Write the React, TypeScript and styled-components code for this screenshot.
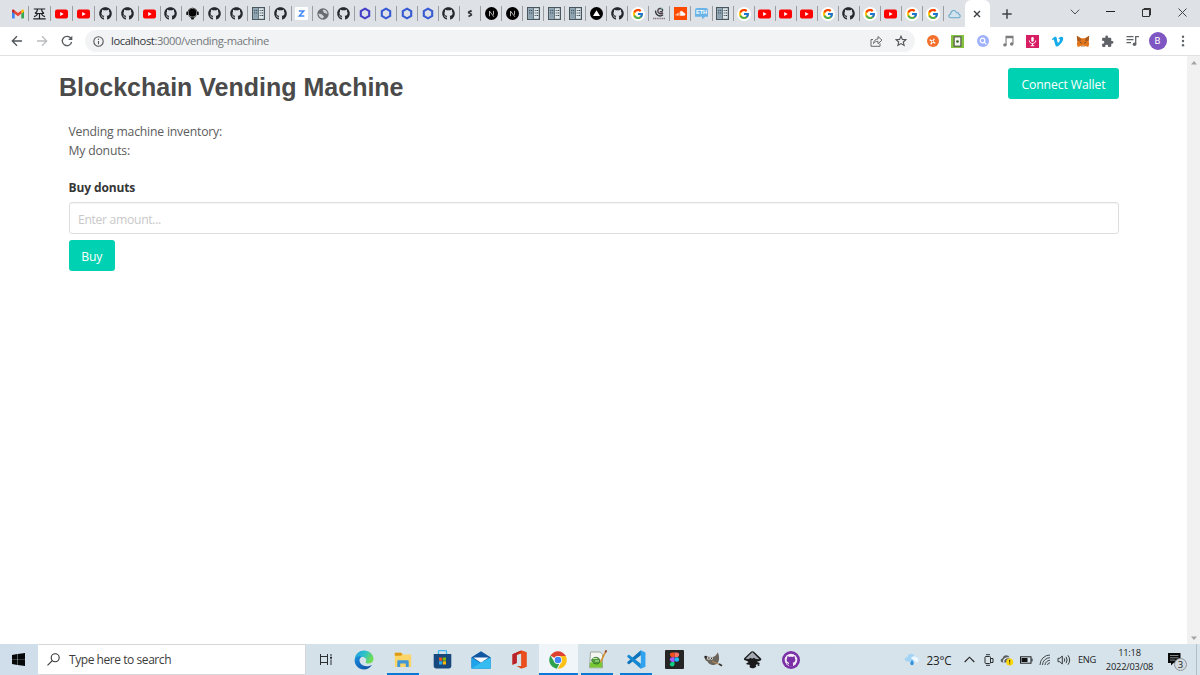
import React from "react";
import styled, { createGlobalStyle } from "styled-components";
import { FaGithub, FaVimeoV } from "react-icons/fa";
import { FcGoogle } from "react-icons/fc";

const GlobalStyle = createGlobalStyle`
  * { box-sizing: border-box; }
  body { margin: 0; background: #fff; overflow: hidden; }
  svg { display: block; flex: none; }
`;

const ui = `"Open Sans", "Noto Sans", sans-serif`;

const Screen = styled.div`
  display: flex;
  flex-direction: column;
  width: 1200px;
  height: 675px;
  font-family: ${ui};
  overflow: hidden;
`;

/* ---------- Browser tabs ---------- */
const TabStrip = styled.div`
  display: flex;
  height: 27px;
  padding-left: 7.6px;
  background: #dee1e6;
`;
const Tab = styled.div<{ $w: number; $last?: boolean }>`
  display: flex;
  align-items: center;
  justify-content: center;
  width: ${(p) => p.$w}px;
  height: 27px;
  flex: none;
  padding-right: 1px;
  background: linear-gradient(#9a9da1, #9a9da1) right 6px / 1px 15px no-repeat;
  ${(p) => p.$last && "background: none; padding-right: 0;"}
`;
const ActiveTab = styled.div`
  display: flex;
  align-items: center;
  justify-content: center;
  width: 25px;
  height: 27px;
  flex: none;
  padding-right: 1px;
  background: #fff;
  border-radius: 6px 6px 0 0;
`;
const NewTab = styled.div`
  display: flex;
  align-items: center;
  justify-content: center;
  width: 34px;
`;
const WindowControls = styled.div`
  display: grid;
  grid-template-columns: repeat(4, 35.7px);
  align-items: center;
  justify-items: center;
  height: 24px;
  margin-left: auto;
`;
const WhiteDisc = styled.span`
  display: flex;
  align-items: center;
  justify-content: center;
  width: 14px;
  height: 14px;
  border-radius: 50%;
  background: #fff;
`;
const BlackDisc = styled(WhiteDisc)`
  width: 13px;
  height: 13px;
  background: #000;
`;

/* ---------- Toolbar ---------- */
const Toolbar = styled.div`
  display: flex;
  align-items: center;
  height: 29px;
  border-bottom: 1px solid #dfe1e4;
  background: #fff;
`;
const NavButtons = styled.div`
  display: grid;
  grid-template-columns: 25px 25px 25px;
  justify-items: center;
  padding-left: 4.5px;
  width: 85px;
`;
const AddressBar = styled.div`
  display: flex;
  align-items: center;
  width: 830px;
  height: 22px;
  padding: 0 8px;
  border-radius: 11px;
  background: #f1f3f4;
`;
const Url = styled.span`
  margin-left: 7px;
  font-size: 11.2px;
  line-height: 22px;
  letter-spacing: -0.38px;
  color: #74787c;
  white-space: nowrap;
  b { font-weight: 400; color: #34373a; }
`;
const AddressActions = styled.div`
  display: flex;
  align-items: center;
  gap: 12px;
  margin-left: auto;
`;
const Extensions = styled.div`
  display: grid;
  grid-template-columns: repeat(11, 25px);
  justify-items: center;
  align-items: center;
  padding-left: 5px;
`;
const Avatar = styled.span`
  width: 18px;
  height: 18px;
  border-radius: 50%;
  background: #7e57c2;
  color: #fff;
  font: 9.5px/18px Roboto, sans-serif;
  text-align: center;
`;
const ExtTile = styled.span<{ $bg: string; $round?: boolean }>`
  display: flex;
  align-items: center;
  justify-content: center;
  width: ${(p) => (p.$round ? 12 : 13)}px;
  height: ${(p) => (p.$round ? 12 : 13)}px;
  border-radius: ${(p) => (p.$round ? "50%" : "0")};
  background: ${(p) => p.$bg};
`;

/* ---------- Page ---------- */
const Viewport = styled.div`
  display: flex;
  height: 588px;
`;
const Page = styled.main`
  flex: 1;
  padding: 12px 68px 0 59px;
`;
const Header = styled.header`
  display: flex;
  justify-content: space-between;
  align-items: flex-start;
  height: 54px;
`;
const Title = styled.h1`
  margin: 3px 0 0;
  font: 700 25px/32px "Liberation Sans", Arial, sans-serif;
  color: #4a4a4a;
  white-space: nowrap;
`;
const PrimaryButton = styled.button<{ $w: number }>`
  width: ${(p) => p.$w}px;
  height: 31.3px;
  padding: 1px 0 0;
  border: 0;
  border-radius: 3px;
  background: #00d1b2;
  color: #fff;
  font: 12.2px/31px ${ui};
  letter-spacing: -0.1px;
`;
const Section = styled.section`
  padding: 1px 0 0 9.5px;
`;
const Line = styled.p`
  margin: 0;
  font-size: 12.2px;
  line-height: 18.6px;
  letter-spacing: -0.18px;
  color: #5c5c5c;
`;
const Label = styled.label`
  display: block;
  margin: 17.9px 0 5.2px;
  font-size: 12px;
  font-weight: 700;
  line-height: 19px;
  letter-spacing: -0.12px;
  color: #363636;
`;
const AmountInput = styled.input`
  display: block;
  width: 100%;
  height: 31.5px;
  margin-bottom: 6px;
  padding: 3px 8.5px 0;
  border: 1px solid #dedede;
  border-radius: 3px;
  box-shadow: inset 0 1px 1px rgba(10, 10, 10, 0.04);
  font: 12.2px ${ui};
  letter-spacing: -0.33px;
  &::placeholder { color: #c9c9c9; opacity: 1; }
`;
const Scrollbar = styled.div`
  display: flex;
  flex-direction: column;
  justify-content: space-between;
  align-items: center;
  width: 13px;
  padding: 5px 0 4px;
  background: #f1f1f1;
`;

/* ---------- Taskbar ---------- */
const Taskbar = styled.div`
  display: flex;
  height: 31px;
  background: linear-gradient(90deg, #cfdeea, #d5e2ea 30%, #d6e3eb);
`;
const Start = styled.div`
  display: flex;
  align-items: center;
  justify-content: center;
  width: 38px;
  padding-right: 1px;
`;
const Search = styled.div`
  display: flex;
  align-items: center;
  width: 268px;
  padding-left: 9px;
  border: solid #d5d8da;
  border-width: 1px 1px 1px 0;
  background: #fff;
  color: #3c3c3c;
  font-size: 12px;
  letter-spacing: -0.44px;
  span { margin-left: 9px; }
`;
const Apps = styled.div`
  display: flex;
  padding-left: 0.3px;
`;
const AppSlot = styled.div<{ $open?: boolean; $active?: boolean }>`
  display: flex;
  align-items: center;
  justify-content: center;
  width: 38.8px;
  background: ${(p) => (p.$active ? "#eff5f9" : "transparent")};
  ${(p) =>
    (p.$open || p.$active) &&
    `background-image: linear-gradient(#0a78d4, #0a78d4);
     background-size: ${p.$active ? 39 : 32}px 2px;
     background-position: bottom center;
     background-repeat: no-repeat;`}
`;
const Tray = styled.div`
  display: grid;
  grid-template-columns: 18px 36px 24px 16px 20px 18px 19px 19px 28px 57px 38px 4px;
  align-items: center;
  justify-items: center;
  margin-left: auto;
  color: #222;
`;
const TrayText = styled.span<{ $size: number; $track?: number }>`
  font-size: ${(p) => p.$size}px;
  letter-spacing: ${(p) => p.$track ?? -0.3}px;
  white-space: nowrap;
`;
const Clock = styled.div`
  font-size: 9.3px;
  line-height: 14px;
  letter-spacing: -0.2px;
  text-align: center;
`;
const DesktopEdge = styled.i`
  justify-self: start;
  width: 1px;
  height: 31px;
  background: #b3bec5;
`;
const Notifications = styled.div`
  position: relative;
  width: 20px;
  height: 20px;
`;
const Count = styled.span`
  position: absolute;
  left: 7px;
  top: 8px;
  width: 13px;
  height: 13px;
  border: 1px solid #8d9499;
  border-radius: 50%;
  background: #d3dae0;
  font-size: 9.5px;
  line-height: 11px;
  text-align: center;
`;

/* ---------- Icons ---------- */
const Gmail = () => (
  <svg width="12" height="10" viewBox="0 0 24 18">
    <path d="M0 2v14.5c0 1 .7 1.500 1.500 1.500H5.500V8z" fill="#4285f4" />
    <path d="M24 2v14.500c0 1-.7 1.500-1.500 1.500h-4V8z" fill="#34a853" />
    <path d="M18.500 2v6.500L24 4.500V2.300c0-2.200-2.500-2.900-4-1.700z" fill="#fbbc04" />
    <path d="M0 4.500l5.500 4V2L4 .6C2.500-.6 0 .1 0 2.300z" fill="#c5221f" />
    <path d="M5.500 2L12 7l6.500-5v6.500L12 13.500l-6.500-5z" fill="#ea4335" />
  </svg>
);
const Beam = () => (
  <svg width="13" height="12" viewBox="0 0 13 12" fill="none" stroke="#1c2022" strokeWidth="1.200">
    <path d="M.8 1h11.400M2 5.500h9M.3 10.900h12.400M6.500 5.500v5.400M4.500 1C4.500 3.500 3.500 4.600 2 5.500M8.500 1c0 2.500 1 3.600 2.500 4.500M4.500 5.500C4.200 7.300 3 8.200 1 8.600M8.500 5.500C8.800 7.300 10 8.200 12 8.600" />
  </svg>
);
const YouTube = () => (
  <svg width="13" height="10" viewBox="0 0 13 10">
    <rect y=".4" width="13" height="9.200" rx="2" fill="#f00" />
    <path d="M5.200 3l3.500 2-3.500 2z" fill="#fff" />
  </svg>
);
const GitHub = () => <FaGithub size={13} color="#24292f" />;
const Bot = () => (
  <svg width="13" height="13" viewBox="0 0 13 13">
    <circle cx="6.500" cy="5.700" r="4" fill="#050505" />
    <path d="M1.200 4.700v3.200M11.800 4.700v3.200" stroke="#111" strokeWidth="1.800" />
    <path d="M1.700 5a4.900 4.900 0 0 1 9.600 0" fill="none" stroke="#222" strokeWidth=".8" />
    <path d="M4.500 10.300h4L7.500 12.500h-2z" fill="#111" />
    <path d="M2.500 8.500c1 1.700 2.500 2 4 2s3-.3 4-2" fill="none" stroke="#333" strokeWidth=".8" />
  </svg>
);
const Book = () => (
  <svg width="13" height="13" viewBox="0 0 13 13">
    <rect x=".6" y=".6" width="11.800" height="11.800" fill="#dfe8ec" stroke="#48575f" strokeWidth="1.200" />
    <rect x="1.200" y="1.200" width="5" height="10.600" fill="#8ba1af" />
    <path d="M6.500 1v11" stroke="#5c6d76" strokeWidth=".9" />
    <path d="M2.200 3.500h1M2.200 6h1M4.200 3.500h1M4.200 6h1M7.700 3.500h1M9.500 3.500h1.700M7.700 6h1M9.500 6h1.700M7.700 8.500h1M9.500 8.500h1.700" stroke="#39454c" strokeWidth="1.100" />
  </svg>
);
const ZTile = () => (
  <svg width="13" height="13" viewBox="0 0 13 13">
    <rect width="13" height="13" rx="1" fill="#fff" />
    <path d="M3.800 4.100h4.900L4.300 9h5" fill="none" stroke="#4189f5" strokeWidth="1.500" />
  </svg>
);
const Globe = () => (
  <svg width="12" height="12" viewBox="0 0 12 12">
    <circle cx="6" cy="6" r="5.700" fill="#686c70" />
    <path d="M6.500 1.500C5.500 2 5.500 3 6.500 3.500c0 1 .5 1.700 1.700 1.500.7.800 1.600.8 2.300.5C10.300 3.500 8.700 1.700 6.500 1.500zM1.500 5.500c1 .5 3.500 0 4 1.500 0 1 1.500.5 1.500 1.500s-1 .7-1.300 2C3 10.200 1.400 8 1.500 5.500z" fill="#d0d3d7" />
  </svg>
);
const Hexagon = ({ color }: { color: string }) => (
  <svg width="12" height="13" viewBox="0 0 12 13">
    <path d="M6 1.700l4.200 2.400v4.800L6 11.300 1.800 8.900V4.100z" fill="none" stroke={color} strokeWidth="2.100" />
  </svg>
);
const Serpent = () => (
  <svg width="6" height="9" viewBox="0 0 7 10">
    <path d="M4.800.7L1 2.600v2l3.500 1.900V4.900L3 4l3-1.300zM2.200 9.300L6 7.400v-2L3 3.800v1.600l1.200.7L1.200 7.500z" fill="#34383b" />
  </svg>
);
const NextMark = () => (
  <svg width="13" height="13" viewBox="0 0 13 13">
    <circle cx="6.500" cy="6.500" r="6.500" fill="#000" />
    <path d="M4.500 9.200V4.100l4.400 5.700M8.500 3.900v3.900" fill="none" stroke="#ddd" strokeWidth=".8" />
  </svg>
);
const Google = () => (
  <WhiteDisc>
    <FcGoogle size={12} />
  </WhiteDisc>
);
const Truffle = () => (
  <svg width="14" height="13" viewBox="0 0 14 13" fill="none">
    <path d="M3.500 3.500C3.500 6.500 5.500 8.700 8 9c1.200 0 2.200-.4 3-1.200" stroke="#3b3a42" strokeWidth="1.400" />
    <path d="M11 5.800C9.500 7.500 5.800 6.700 5.800 3.900 5.800 1.300 9.300.6 10.500 2.600c.7 1.700-1.500 3-2.500 1.500" stroke="#4a4048" strokeWidth="1.400" />
    <circle cx="10" cy="1.300" r=".9" fill="#78c6c0" />
    <path d="M1 11.500h12" stroke="#8a7880" strokeWidth="1.500" strokeDasharray="1.200 .6" />
  </svg>
);
const SoundCloud = () => (
  <svg width="13" height="13" viewBox="0 0 13 13">
    <rect width="13" height="13" fill="#ff4a00" />
    <path d="M6.300 8.500V4.600c1.500-.9 3 .1 3.300 1.500 2 0 2 2.400.3 2.400z" fill="#fff" stroke="#fff" strokeWidth=".5" />
    <path d="M2.200 7v1.500M3.600 6.300v2.400M5 5.500v3.200" stroke="#fff" strokeWidth=".8" />
  </svg>
);
const EthChat = styled.span`
  width: 13px;
  height: 12px;
  border-radius: 2px;
  background: #6ab4e8;
  color: #fff;
  font: 700 5.5px/9px "Liberation Sans", sans-serif;
  text-align: center;
  clip-path: polygon(0 0, 100% 0, 100% 78%, 78% 78%, 55% 100%, 55% 78%, 0 78%);
`;
const Cloud = () => (
  <svg width="13" height="10" viewBox="0 0 13 10">
    <path d="M3 8.800C.2 8.800 0 5.700 2.500 5.200 3 1 7.500.2 8.500 3.600c1.700-.2 2.300.7 2.300 1.700 2 .6 1.800 3.300-.3 3.500z" fill="#d3e3ee" stroke="#6aa9ca" strokeWidth="1.100" />
  </svg>
);
const Vercel = () => (
  <BlackDisc>
    <svg width="7" height="7" viewBox="0 0 7 7"><path d="M3.500.3L7 6H0z" fill="#fff" /></svg>
  </BlackDisc>
);

const ICONS: Record<string, React.ReactNode> = {
  gmail: <Gmail />, beam: <Beam />, yt: <YouTube />, gh: <GitHub />, bot: <Bot />, book: <Book />,
  z: <ZTile />, globe: <Globe />, violet: <Hexagon color="#4540c8" />, hex: <Hexagon color="#375bd2" />,
  sol: <Serpent />, next: <NextMark />, vercel: <Vercel />, g: <Google />, truffle: <Truffle />,
  sc: <SoundCloud />, eth: <EthChat>ETH</EthChat>, cloud: <Cloud />,
};
const PINNED = "gmail beam yt yt gh gh yt gh bot gh gh book gh".split(" ");
const TABS =
  "z globe gh violet hex hex hex gh sol next next book book book vercel gh g truffle sc eth book g yt yt yt g gh g yt g g cloud".split(" ");

const Stroke = ({ w, h, d, color = "#55595d", sw = 1.2 }: { w: number; h: number; d: string; color?: string; sw?: number }) => (
  <svg width={w} height={h} viewBox={`0 0 ${w} ${h}`} fill="none" stroke={color} strokeWidth={sw}>
    <path d={d} />
  </svg>
);

const Reload = () => (
  <svg width="12" height="12" viewBox="0 0 12 12">
    <path d="M9.800 3.200A4.700 4.700 0 1 0 10.600 7" fill="none" stroke="#55595d" strokeWidth="1.300" />
    <path d="M11.300.8v4.200H7.100z" fill="#55595d" />
  </svg>
);
const Info = () => (
  <svg width="11" height="11" viewBox="0 0 11 11" fill="none" stroke="#55595d" strokeWidth="1.100">
    <circle cx="5.500" cy="5.500" r="4.700" />
    <path d="M5.500 5v3.200M5.500 2.700v1.200" />
  </svg>
);
const Fox = () => (
  <svg width="14" height="13" viewBox="0 0 14 13">
    <path d="M.8.8L5.300 3.200h3.400L13.200.8l-.6 4.700.6 3.700-1 2.700-3-.8-1.300 1H6l-1.200-1-3 .8-1-2.700.6-3.700z" fill="#e2761b" />
    <path d="M.8.8l4.500 3.400-1 2.300-3-.8zM13.200.8L8.700 4.200l1 2.300 3-.8z" fill="#a85a20" />
    <path d="M5.500 10.500h3l-.5 1.500H6z" fill="#d7c1b3" />
    <path d="M3.500 7.200l2 .2-.2 1.200zM10.500 7.200l-2 .2.200 1.200z" fill="#233447" />
  </svg>
);
const Puzzle = () => (
  <svg width="13" height="13" viewBox="0 0 24 24" fill="#5f6368">
    <path d="M20.500 11H19V7c0-1.100-.9-2-2-2h-4V3.500a2.500 2.500 0 0 0-5 0V5H4c-1.100 0-2 .9-2 2v3.800h1.500a2.700 2.700 0 0 1 0 5.400H2V20c0 1.100.9 2 2 2h3.800v-1.500a2.700 2.700 0 0 1 5.400 0V22H17c1.100 0 2-.9 2-2v-4h1.500a2.500 2.500 0 0 0 0-5z" />
  </svg>
);
const Note = () => (
  <svg width="12" height="12" viewBox="0 0 12 12" fill="#7b7b7b">
    <path d="M3.500.8h8v8.200h-1.100V3.200H4.600V10H3.500z" />
    <circle cx="2.900" cy="9.900" r="1.700" /><circle cx="9.700" cy="9" r="1.700" />
  </svg>
);
const Queue = () => (
  <svg width="13" height="12" viewBox="0 0 13 12">
    <path d="M.5 1.700h7M.5 4.700h7M.5 7.700h4.500M9.700 9.200V1.700H13" fill="none" stroke="#5f6368" strokeWidth="1.300" />
    <circle cx="8.500" cy="9.300" r="1.800" fill="#5f6368" />
  </svg>
);
const Kebab = () => (
  <svg width="4" height="12" viewBox="0 0 4 12" fill="#5f6368">
    <circle cx="2" cy="1.700" r="1.200" /><circle cx="2" cy="6" r="1.200" /><circle cx="2" cy="10.300" r="1.200" />
  </svg>
);

const WindowsLogo = () => (
  <svg width="13" height="13" viewBox="0 0 13 13" fill="#050708">
    <path d="M0 1.900l5.300-.8v5.100H0zM5.700 1L13 0v6.200H5.700zM0 6.600h5.300v5.300L0 11.100zM5.700 6.600H13V13l-7.300-1z" />
  </svg>
);
const Edge = () => (
  <svg width="20" height="20" viewBox="0 0 20 20">
    <defs>
      <linearGradient id="edgeTop" x1="0" y1="0" x2="1" y2=".4">
        <stop offset="0" stopColor="#1c9be0" /><stop offset=".55" stopColor="#2fc2c9" /><stop offset="1" stopColor="#6fdd55" />
      </linearGradient>
      <linearGradient id="edgeLow" x1="0" y1="0" x2="1" y2="1">
        <stop offset="0" stopColor="#1b8fe0" /><stop offset="1" stopColor="#0c4a9c" />
      </linearGradient>
    </defs>
    <path d="M.8 9C1.500 3.500 5.500.5 10 .5c5.500 0 9.500 4 9.500 8.300 0 3-2.300 4.700-5 4.700-2.200 0-3.300-.8-2.700-1.600 1.500-2.500-.3-5-3.800-5-3.200 0-6 1-7.200 2.100z" fill="url(#edgeTop)" />
    <path d="M.6 9.500C2 6.700 5 5.500 8 6.800c-2.800 1-3.200 4.300-1.300 6.700 2.300 3 7 3.800 11.300 1.300-1.700 3-4.700 4.700-8 4.700-5.500 0-9.700-4.500-9.400-10z" fill="url(#edgeLow)" />
  </svg>
);
const Explorer = () => (
  <svg width="18" height="16" viewBox="0 0 18 16">
    <path d="M.8.8h6.500l1.500 1.700h8.400V15H.8z" fill="#fbd567" />
    <path d="M.8.8h6.500l1 1.700L7 3.700H.8z" fill="#dd9a13" />
    <path d="M3.300 15V9.500c0-.8.5-1.200 1.200-1.200h9c.7 0 1.200.4 1.200 1.200V15h-2.900v-3.500H6.200V15z" fill="#3f97d8" />
  </svg>
);
const Store = () => (
  <svg width="19" height="19" viewBox="0 0 19 19">
    <path d="M5.500 4.500v-3c0-.6.300-.9.900-.9h6.200c.6 0 .9.300.9.900v3" fill="none" stroke="#43b8ef" strokeWidth="1.300" />
    <path d="M.7 4h17.600v12c0 1.500-1 2.500-2.500 2.500H3.200C1.700 18.500.7 17.500.7 16z" fill="#17497f" />
    <path d="M6 7.500h3.200v3.200H6z" fill="#f25022" /><path d="M9.800 7.500H13v3.200H9.800z" fill="#7fba00" />
    <path d="M6 11.300h3.200v3.200H6z" fill="#28a8ea" /><path d="M9.800 11.300H13v3.200H9.800z" fill="#ffb900" />
  </svg>
);
const Mail = () => (
  <svg width="20" height="18" viewBox="0 0 20 18">
    <path d="M.5 6.200L10 .3l9.500 5.900V17.500H.5z" fill="#1156a0" />
    <path d="M.5 6.600l9.500 5.600 9.500-5.600v10.900H.5z" fill="#1fa3ea" />
    <path d="M2.300 6.400h15.400L10 11.800z" fill="#f7fafc" />
    <path d="M.5 17.500L10 11.800l9.500-5.200v10.900z" fill="#37bcf2" />
  </svg>
);
const Office = () => (
  <svg width="15" height="19" viewBox="0 0 15 19">
    <path d="M9.200.4l5.300 1.800v14.600l-5.300 1.800-4.500-2.700 4.700.4V3.600L4.700 5v8L.5 14.800V4.200z" fill="#d83b01" />
    <path d="M9.200.4L4.700 5v8L.5 14.800V4.200z" fill="#b7222c" />
    <path d="M9.400 3.600V.5l5.100 1.700v14.600l-5.100 1.700z" fill="#ea4f1d" />
  </svg>
);
const Chrome = () => (
  <svg width="18" height="18" viewBox="0 0 18 18">
    <path d="M9 9L1.400 4.600A8.800 8.800 0 0 1 16.600 4.600L17 5H9z" fill="#e04232" />
    <path d="M9 5h7.800A8.800 8.800 0 0 1 8.800 17.800L12.500 11z" fill="#fbc116" />
    <path d="M1.400 4.600L5.500 11l3.500 2 1.200 0-2.400 4.700A8.800 8.800 0 0 1 1.400 4.600z" fill="#2fa24c" />
    <circle cx="9" cy="9" r="4.100" fill="#fff" /><circle cx="9" cy="9" r="3.300" fill="#4285f4" />
  </svg>
);
const NotepadPlus = () => (
  <svg width="19" height="19" viewBox="0 0 19 19">
    <path d="M2.500 2h9.800l2.200 2.500V17.800H1.500z" fill="#f4f6f2" stroke="#8d958c" strokeWidth=".8" />
    <path d="M2 12.500c2-1 3.500.7 6 0s4-1 6.200-.2v5.300H1.800z" fill="#77c832" />
    <path d="M3.500 10.500c1-3.500 6.500-4.500 8.200-1 .9 2.300-.7 4.500-3 4.500-2 0-4-1-5.200-3.500z" fill="#4d9e36" stroke="#275d25" strokeWidth=".7" />
    <path d="M5 8.500h4.500M7 11h4" stroke="#d5efbf" strokeWidth=".9" />
    <path d="M18 .8l-5.500 11.400" stroke="#d58f27" strokeWidth="1.500" />
    <path d="M18.400.3l-1 2" stroke="#8c3a2c" strokeWidth="1.600" />
  </svg>
);
const VSCode = () => (
  <svg width="19" height="19" viewBox="0 0 24 24">
    <path d="M17.500.3v6.300L3 17.700c-.4.300-.9.300-1.300 0L.5 16.600c-.4-.4-.4-.9 0-1.300z" fill="#0d73ba" />
    <path d="M17.500 23.700v-6.300L3 6.300c-.4-.3-.9-.3-1.300 0L.5 7.400c-.4.4-.4.900 0 1.300z" fill="#1688d1" />
    <path d="M17.500.3L23.300 3v18l-5.800 2.700z" fill="#2fa3ef" />
  </svg>
);
const Figma = () => (
  <svg width="19" height="19" viewBox="0 0 19 19">
    <rect width="19" height="19" rx="1" fill="#252525" />
    <path d="M9.500 2.500H7.200a2.300 2.300 0 0 0 0 4.700h2.300z" fill="#f24e1e" />
    <path d="M9.500 2.500h2.300a2.300 2.300 0 0 1 0 4.700H9.500z" fill="#ff7262" />
    <path d="M9.500 7.200H7.200a2.300 2.300 0 0 0 0 4.700h2.300z" fill="#a259ff" />
    <circle cx="11.800" cy="9.500" r="2.300" fill="#1abcfe" />
    <path d="M9.500 11.900H7.200a2.300 2.300 0 1 0 2.300 2.300z" fill="#0acf83" />
  </svg>
);
const Gimp = () => (
  <svg width="19" height="15" viewBox="0 0 19 15">
    <path d="M1 5.500c1.500-1.500 3-1.500 5-.8C9 5.500 12 4.500 13.500.5c1.300 1.500 1.800 4.500 1.500 6.800-.3 4-3.300 6-6.500 5.700-2.500-.2-4.300-1.700-5.300-4C1.500 9 .5 7 1 5.500z" fill="#6b655b" />
    <circle cx="4.800" cy="6" r="1.700" fill="#f3f3f1" /><circle cx="7.600" cy="6.300" r="1.400" fill="#f3f3f1" />
    <circle cx="4.900" cy="6.100" r=".8" fill="#111" /><circle cx="7.600" cy="6.300" r=".7" fill="#111" />
    <circle cx="1.600" cy="5.100" r="1.300" fill="#222" />
    <path d="M8 9.300l7.500 3.200" stroke="#b0895c" strokeWidth="1.200" /><path d="M15 12l3 1.700" stroke="#333" strokeWidth="1.800" />
  </svg>
);
const Inkscape = () => (
  <svg width="19" height="18" viewBox="0 0 19 18">
    <path d="M9.500.3c.8 0 1.300.3 2 1l6.300 6c1.700 2-1 2.700-3.500 3.200-.8.800 3 1 2.500 2-.6 1.200-3.500.5-4 1.500-.4 1 1 1.200 0 2-1.800 1.700-4.500 1.800-6 .3-.8-.9.500-1.300 0-2.200-.6-.9-3 .2-3.600-1.300-.3-1 2.300-1 2.200-1.900C4 9.600-.2 9.500 1.200 7.300l6.300-6c.7-.7 1.200-1 2-1z" fill="#1a1a1a" />
    <path d="M9.500 1.100L2.500 7.700l3.300.3 1.700-1.300 1.500 1 2-1 1.700 1.300 3.800.2-6-6c-.4-.5-.7-.8-1-1z" fill="#a5aab3" />
    <circle cx="15.500" cy="14" r="1" fill="#222" />
  </svg>
);
const GitHubDesktop = styled.span`
  display: flex;
  width: 18px;
  height: 18px;
  align-items: center;
  justify-content: center;
  border-radius: 50%;
  background: #7b2fa6;
`;
const CatMark = () => (
  <svg width="14" height="14" viewBox="0 0 14 14">
    <circle cx="7" cy="7" r="6.300" fill="#f3ecf7" />
    <path d="M3.400 3.200c.9 0 1.500.3 2 .7 1-.3 2.200-.3 3.200 0 .5-.4 1.100-.7 2-.7.300.7.300 1.300.1 1.800 1.300 1.700.7 4.400-2 4.700.4.500.4 1 .4 3.300a6.300 6.300 0 0 1-4.200 0v-1.300c-1.500.3-1.600-.9-2.300-1.300.9-.3 1.200.7 2.300.5 0-.5.1-.9.400-1.200-2.700-.3-3.300-3-2-4.700-.2-.5-.2-1.100.1-1.800z" fill="#7b2fa6" />
  </svg>
);

const APPS: { icon: React.ReactNode; open?: boolean; active?: boolean }[] = [
  { icon: <svg width="14" height="13" viewBox="0 0 14 13" fill="none" stroke="#2b2f32" strokeWidth="1"><path d="M1.500 1v11M8.500 1v11M1.500 3.500h7M1.500 9.500h7M12 1v2M12 6.500V12" /><path d="M11 4.700h2" strokeWidth="2" /></svg> },
  { icon: <Edge /> },
  { icon: <Explorer />, open: true },
  { icon: <Store /> },
  { icon: <Mail /> },
  { icon: <Office /> },
  { icon: <Chrome />, active: true },
  { icon: <NotepadPlus />, open: true },
  { icon: <VSCode />, open: true },
  { icon: <Figma /> },
  { icon: <Gimp /> },
  { icon: <Inkscape /> },
  { icon: <GitHubDesktop><CatMark /></GitHubDesktop> },
];

export default function App() {
  return (
    <Screen>
      <GlobalStyle />
      <TabStrip>
        {PINNED.map((k, i) => <Tab key={i} $w={21.85}>{ICONS[k]}</Tab>)}
        {TABS.map((k, i) => <Tab key={i} $w={21.05} $last={i === TABS.length - 1}>{ICONS[k]}</Tab>)}
        <ActiveTab><Stroke w={8} h={8} d="M1 1l6 6M7 1L1 7" color="#3c4043" sw={1.4} /></ActiveTab>
        <NewTab><Stroke w={10} h={10} d="M5 .3v9.400M.3 5h9.400" color="#3f4347" sw={1.5} /></NewTab>
        <WindowControls>
          <Stroke w={10} h={6} d="M.8.7L5 5 9.200.7" color="#4b4e51" sw={1} />
          <Stroke w={9} h={2} d="M0 .5h9" color="#222" sw={1} />
          <Stroke w={9} h={9} d="M.5 1.500h7v7h-7zM2 1.500v-1h6.500v6.500h-1" color="#333" sw={1} />
          <Stroke w={9} h={9} d="M.5.5l8 8M8.500.5l-8 8" color="#444" sw={1} />
        </WindowControls>
      </TabStrip>

      <Toolbar>
        <NavButtons>
          <Stroke w={12} h={12} d="M11 6H1.500M6 1.300L1.300 6 6 10.700" color="#505458" sw={1.3} />
          <Stroke w={12} h={12} d="M1 6h9.500M6 1.300L10.700 6 6 10.700" color="#babcbe" sw={1.3} />
          <Reload />
        </NavButtons>
        <AddressBar>
          <Info />
          <Url><b>localhost</b>:3000/vending-machine</Url>
          <AddressActions>
            <Stroke w={13} h={12} d="M3 4.500H1v6.800h9V8.500M3.500 8.500C4 5.500 5.500 4 8 4V1.500L12 5.200 8 8.700V6.300C6 6.300 4.700 7 3.500 8.500z" color="#66696d" sw={1} />
            <Stroke w={12} h={12} d="M6 1.200l1.400 3.200 3.500.3-2.600 2.300.8 3.400L6 8.600l-3.100 1.800.8-3.400L1.100 4.700l3.500-.3z" color="#505458" sw={1.1} />
          </AddressActions>
        </AddressBar>
        <Extensions>
          <ExtTile $bg="#f36f2b" $round>
            <svg width="9" height="9" viewBox="0 0 9 9" fill="none" stroke="#fff"><path d="M1.700 2.700l2 1.200M6.300 1.700L5.200 3.700M2.700 7.300l1.200-2M7.300 6.300l-2-1.200" strokeWidth="1.300" /><circle cx="4.500" cy="4.500" r="1.100" strokeWidth=".7" /></svg>
          </ExtTile>
          <ExtTile $bg="#86c440">
            <svg width="9" height="11" viewBox="0 0 9 11"><rect x="1.100" y=".8" width="6.800" height="9.400" fill="#f3f7f0" stroke="#55594f" strokeWidth="1.200" /><circle cx="4.500" cy="5.500" r="1.300" fill="#315f25" /></svg>
          </ExtTile>
          <ExtTile $bg="#9fb1fb" $round>
            <svg width="8" height="8" viewBox="0 0 8 8" fill="none" stroke="#fff" strokeWidth="1.200"><circle cx="3.500" cy="3.500" r="2.300" /><path d="M5.200 5.200l2.200 2.200" /></svg>
          </ExtTile>
          <Note />
          <ExtTile $bg="#d81e63">
            <svg width="9" height="11" viewBox="0 0 9 11" fill="none" stroke="#fff"><rect x="3.300" y="1" width="2.400" height="4.800" rx="1.200" fill="#fff" stroke="none" /><path d="M1.300 4.500c0 4 6.400 4 6.400 0M4.500 7.500v2M2.700 9.700h3.600" /></svg>
          </ExtTile>
          <FaVimeoV size={13} color="#14abe9" />
          <Fox />
          <Puzzle />
          <Queue />
          <Avatar>B</Avatar>
          <Kebab />
        </Extensions>
      </Toolbar>

      <Viewport>
        <Page>
          <Header>
            <Title>Blockchain Vending Machine</Title>
            <PrimaryButton $w={111}>Connect Wallet</PrimaryButton>
          </Header>
          <Section>
            <Line>Vending machine inventory:</Line>
            <Line>My donuts:</Line>
            <Label>Buy donuts</Label>
            <AmountInput placeholder="Enter amount..." />
            <PrimaryButton $w={46.5}>Buy</PrimaryButton>
          </Section>
        </Page>
        <Scrollbar>
          <svg width="6" height="4" viewBox="0 0 6 4"><path d="M3 0l3 3.500H0z" fill="#a3a3a3" /></svg>
          <svg width="6" height="4" viewBox="0 0 6 4"><path d="M3 4L0 .5h6z" fill="#a3a3a3" /></svg>
        </Scrollbar>
      </Viewport>

      <Taskbar>
        <Start><WindowsLogo /></Start>
        <Search>
          <svg width="13" height="13" viewBox="0 0 13 13" fill="none" stroke="#333" strokeWidth="1.100"><circle cx="8.200" cy="4.700" r="4" /><path d="M5.300 7.600L.5 12.400" /></svg>
          <span>Type here to search</span>
        </Search>
        <Apps>
          {APPS.map((a, i) => <AppSlot key={i} $open={a.open} $active={a.active}>{a.icon}</AppSlot>)}
        </Apps>
        <Tray>
          <svg width="16" height="13" viewBox="0 0 16 13">
            <path d="M3.500 8.500C-.3 8.500.2 4 3.500 4 4 .2 9.500-.3 10.500 3.200c4.500-.7 6 5.300 1.500 5.800z" fill="#a3d3f4" />
            <path d="M7 5c2-3 7.500-2 7.800 1.800.2 2-1.300 2.500-3 2.500z" fill="#eef7fd" />
            <path d="M8 7c1.200 1.700 1.700 2.500 1.700 3.500a1.700 1.700 0 0 1-3.400 0C6.300 9.500 6.800 8.700 8 7z" fill="#3390dc" />
          </svg>
          <TrayText $size={11.7} $track={-0.2}>23°C</TrayText>
          <Stroke w={11} h={7} d="M.7 6L5.500 1.200 10.300 6" color="#222" sw={1.1} />
          <svg width="10" height="12" viewBox="0 0 10 12" fill="none" stroke="#2b2f32"><rect x="1" y="2.500" width="5.500" height="7" rx="1" /><path d="M6.500 4.500H9v4H6.500M2 .7h4M2 11.300h4" /></svg>
          <svg width="14" height="12" viewBox="0 0 14 12">
            <path d="M3 8.500C-.5 8 .5 4.500 2.500 4.500 3 .5 8.500 0 9.500 3.500L10 8.500z" fill="#5c6062" />
            <path d="M4 8.500c-1.500-3 2-5.500 6-4.500" fill="none" stroke="#e8eef2" strokeWidth="1.100" /><circle cx="9.700" cy="8" r="3.500" fill="#ffd800" /><path d="M9.700 5.800v2.700M9.700 9.300v1" stroke="#333" />
          </svg>
          <svg width="13" height="8" viewBox="0 0 13 8"><rect x=".5" y=".8" width="10.500" height="6.400" fill="none" stroke="#1c1f21" /><path d="M1.500 2h6v4h-6z" fill="#111" /><path d="M12 2.500v3" stroke="#222" /></svg>
          <Stroke w={12} h={12} d="M1 11A10 10 0 0 1 11 1M3.500 11A7.500 7.500 0 0 1 11 3.700M6 11A5 5 0 0 1 11 6.300M8.500 11A2.500 2.500 0 0 1 11 8.800" color="#43484b" sw={1} />
          <Stroke w={14} h={12} d="M1 4.300h1.800L5.300 2v8L2.800 7.700H1zM7.200 4.300q1.200 1.700 0 3.400M9 2.800q2.300 3.200 0 6.400M11 1.300q3.300 4.700 0 9.400" color="#34383b" sw={1} />
          <TrayText $size={9.3}>ENG</TrayText>
          <Clock>11:18<br />2022/03/08</Clock>
          <Notifications>
            <svg width="20" height="20" viewBox="0 0 20 20"><path d="M1 3h12.500v10H6.500L4 15.500V13H1z" fill="#0a0a0a" /><path d="M3 5.500h8.500M3 7.800h8.500M3 10.100h5" stroke="#8b9499" strokeWidth=".9" /></svg>
            <Count>3</Count>
          </Notifications>
          <DesktopEdge />
        </Tray>
      </Taskbar>
    </Screen>
  );
}
